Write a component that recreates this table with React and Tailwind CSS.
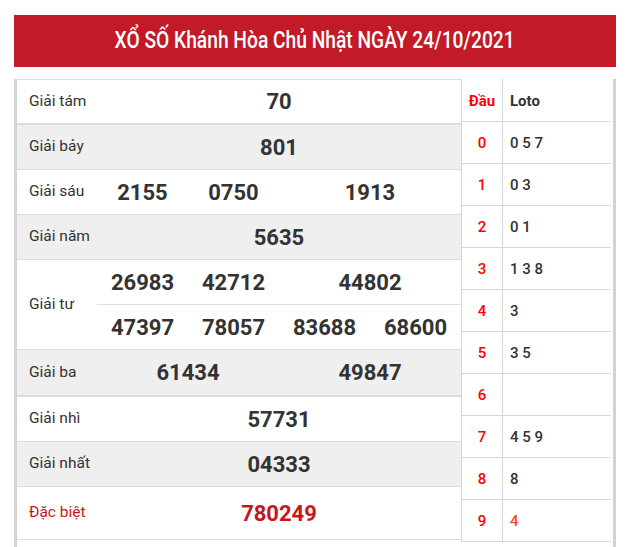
import React from "react";

const rows = [
  { label: "Giải tám", h: "h-[46px] border-t border-b-2", bg: "bg-white", nums: [["70", 4]] },
  { label: "Giải bảy", h: "h-[45px] border-b", bg: "bg-[#efefef]", nums: [["801", 4]] },
  { label: "Giải sáu", h: "h-[45px] border-b", bg: "bg-white", nums: [["2155", 1], ["0750", 1], ["1913", 2]] },
  { label: "Giải năm", h: "h-[45px] border-b", bg: "bg-[#efefef]", nums: [["5635", 4]] },
];

const rowsBottom = [
  { label: "Giải ba", h: "h-[47px] border-b-2", bg: "bg-[#efefef]", nums: [["61434", 2], ["49847", 2]] },
  { label: "Giải nhì", h: "h-[45px] border-b", bg: "bg-white", nums: [["57731", 4]] },
  { label: "Giải nhất", h: "h-[45px] border-b", bg: "bg-[#efefef]", nums: [["04333", 4]] },
];

const loto = [
  ["0", "0 5 7"],
  ["1", "0 3"],
  ["2", "0 1"],
  ["3", "1 3 8"],
  ["4", "3"],
  ["5", "3 5"],
  ["6", ""],
  ["7", "4 5 9"],
  ["8", "8"],
  ["9", "4"],
];

const spanClass = { 1: "col-span-1", 2: "col-span-2", 4: "col-span-4" };

const Numbers = ({ nums, red }) => (
  <div className="grid grid-cols-4 w-[364px] h-full items-center">
    {nums.map(([n, span], i) => (
      <div
        key={i}
        className={`${spanClass[span]} text-center text-[22px] font-bold ${red ? "text-[#c8161d]" : "text-[#333]"}`}
      >
        {n}
      </div>
    ))}
  </div>
);

const Row = ({ row }) => (
  <div className={`flex items-center border-[#dddddd] ${row.h} ${row.bg}`}>
    <div className="w-[80px] pl-[12px] text-[15.5px] text-[#333]">{row.label}</div>
    <Numbers nums={row.nums} />
  </div>
);

export default function App() {
  return (
    <div className="w-[630px] h-[547px] bg-white overflow-hidden" style={{ fontFamily: "Roboto, 'Noto Sans', sans-serif" }}>
      <div className="mx-[14px] mt-[15px] h-[52px] bg-[#c21a26] flex items-center justify-center">
        <span className="inline-block text-white text-[23px] font-medium scale-x-[0.835] whitespace-nowrap">
          XỔ SỐ Khánh Hòa Chủ Nhật NGÀY 24/10/2021
        </span>
      </div>

      <div className="mx-[14px] mt-[12px] h-[480px] flex border-x-[3px] border-[#d3d3d3]">
        {/* Left: results */}
        <div className="w-[444px]">
          {rows.map((r) => (
            <Row key={r.label} row={r} />
          ))}
          <div className="flex h-[90px] border-b border-[#dddddd] bg-white">
            <div className="w-[80px] pl-[12px] flex items-center text-[15.5px] text-[#333]">Giải tư</div>
            <div className="flex flex-col">
              <div className="h-[45px] border-b border-[#dddddd]">
                <Numbers nums={[["26983", 1], ["42712", 1], ["44802", 2]]} />
              </div>
              <div className="h-[44px]">
                <Numbers nums={[["47397", 1], ["78057", 1], ["83688", 1], ["68600", 1]]} />
              </div>
            </div>
          </div>
          {rowsBottom.map((r) => (
            <Row key={r.label} row={r} />
          ))}
          <div className="flex items-center h-[53px] border-b border-[#dddddd] bg-white">
            <div className="w-[80px] pl-[12px] text-[15.5px] text-[#c8161d]">Đặc biệt</div>
            <Numbers nums={[["780249", 4]]} red />
          </div>
        </div>

        {/* Right: loto */}
        <div className="w-[150px]">
          <div className="flex h-[43px] border-b border-[#d6d6d6]">
            <div className="w-[41px] border-l border-[#d6d6d6] flex items-center justify-center pt-[2px] text-[15px] font-bold text-[#ff0000]">
              Đầu
            </div>
            <div className="flex-1 border-l border-[#d6d6d6] flex items-center pl-[7px] pt-[2px] text-[15px] font-bold text-[#333]">
              Loto
            </div>
          </div>
          {loto.map(([d, v]) => (
            <div key={d} className="flex h-[42px] border-b border-[#d6d6d6]">
              <div className="w-[41px] border-l border-[#d6d6d6] flex items-center justify-center pt-[2px] text-[15px] font-medium text-[#ff0000]">
                {d}
              </div>
              <div
                className={`flex-1 border-l border-[#d6d6d6] flex items-center pl-[7px] pt-[2px] text-[15px] font-medium ${
                  d === "9" ? "text-[#ff4422]" : "text-[#333]"
                }`}
              >
                {v}
              </div>
            </div>
          ))}
        </div>
      </div>
    </div>
  );
}
